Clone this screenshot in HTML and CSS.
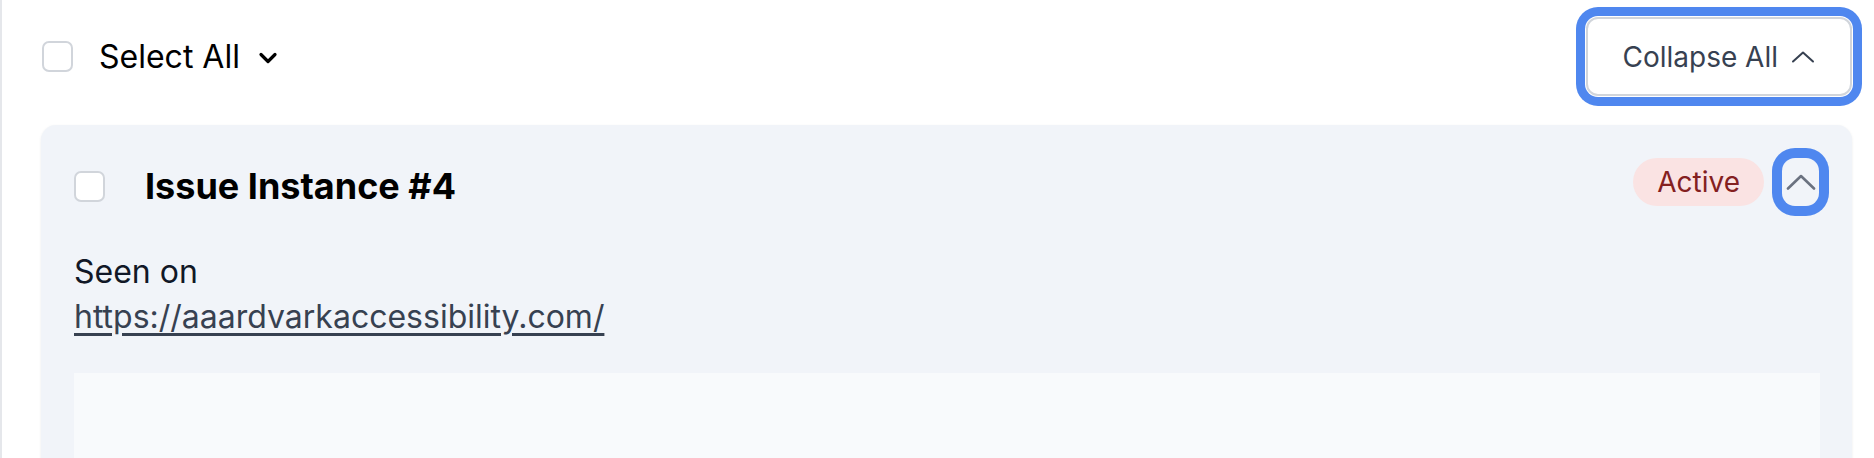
FILE: index.html
```html
<!DOCTYPE html>
<html lang="en">
<head>
    <meta charset="UTF-8">
    <title>Issue Instances</title>
    <link rel="stylesheet" href="styles.css">
</head>

<body>
    <div class="page">
        <div class="toolbar">
            <label class="select-all">
                <input type="checkbox" class="check">
                <span>Select All</span>
                <svg class="select-caret" width="20" height="14" viewBox="0 0 20 14">
                    <path d="M3 3.5l7 7 7-7" fill="none" stroke="#000" stroke-width="3.2" stroke-linecap="round" stroke-linejoin="round"/>
                </svg>
            </label>

            <button class="collapse-btn" type="button">
                Collapse All
                <svg width="24" height="12" viewBox="0 0 24 12">
                    <path d="M2 10.5L12 1.5l10 9" fill="none" stroke="#374151" stroke-width="2" stroke-linecap="round" stroke-linejoin="round"/>
                </svg>
            </button>
        </div>

        <div class="issue-card">
            <div class="issue-head">
                <div class="issue-title-wrap">
                    <input type="checkbox" class="check">
                    <h3 class="issue-title">Issue Instance #4</h3>
                </div>
                <div class="issue-actions">
                    <span class="badge">Active</span>
                    <button class="toggle-btn" type="button">
                        <svg width="30" height="16" viewBox="0 0 30 16">
                            <path d="M2 14.5L15 2l13 12.5" fill="none" stroke="#6b7280" stroke-width="2.6" stroke-linecap="round" stroke-linejoin="round"/>
                        </svg>
                    </button>
                </div>
            </div>

            <div class="issue-body">
                <p class="seen-label">Seen on</p>
                <a class="seen-link" href="#">https://aaardvarkaccessibility.com/</a>
                <div class="preview"></div>
            </div>
        </div>
    </div>
</body>
</html>
```

FILE: styles.css
```css
body {
    margin: 0;
    font-family: 'Inter', 'Noto Sans', sans-serif;
    background: #fff;
    color: #111827;
    overflow: hidden;
}

.page {
    border-left: 2px solid #e5e7eb;
    padding: 17px 22px 0 39px;
    min-height: 100vh;
}

.toolbar {
    display: flex;
    justify-content: space-between;
    align-items: center;
    margin-bottom: 29px;
}

.select-all {
    display: flex;
    align-items: center;
    font-size: 32px;
    color: #000;
    margin-left: 1px;
}

.select-all span {
    margin-left: 26px;
}

.select-caret {
    margin-left: 18px;
    margin-top: 2px;
}

.check {
    appearance: none;
    -webkit-appearance: none;
    margin: 0;
    width: 31px;
    height: 31px;
    border: 2px solid #d1d5db;
    border-radius: 7px;
    background: #fff;
    flex-shrink: 0;
}

.collapse-btn {
    display: flex;
    align-items: center;
    gap: 13px;
    height: 79px;
    padding: 0 35px 0 34px;
    font-family: inherit;
    font-size: 28px;
    color: #374151;
    background: #fff;
    border: 2px solid #d1d5db;
    border-radius: 12px;
    box-shadow: 0 0 0 1px #fff, 0 0 0 10px #4f87ef;
    cursor: pointer;
}

.issue-card {
    background: #f1f4f9;
    border-radius: 15px;
    padding: 32px 32px 0 33px;
    box-shadow: 0 1px 3px rgba(0, 0, 0, 0.08);
}

.issue-head {
    display: flex;
    justify-content: space-between;
    align-items: flex-start;
}

.issue-title-wrap {
    display: flex;
    align-items: center;
    margin-top: 4px;
}

.issue-title {
    margin: 0 0 0 40px;
    font-size: 36px;
    line-height: 51px;
    font-weight: 700;
    color: #000;
}

.issue-actions {
    display: flex;
    align-items: center;
    gap: 19px;
}

.badge {
    display: inline-flex;
    align-items: center;
    height: 48px;
    padding: 0 24px;
    border-radius: 24px;
    background: #fae3e3;
    color: #84201f;
    font-size: 28px;
    margin-top: 1px;
}

.toggle-btn {
    display: flex;
    align-items: center;
    justify-content: center;
    width: 35px;
    height: 46px;
    padding: 0;
    margin-right: 2px;
    border: none;
    border-radius: 12px;
    background: #f1f4f9;
    box-shadow: 0 0 0 1px #f1f4f9, 0 0 0 11px #4f87ef;
    cursor: pointer;
}

.issue-body {
    margin-top: 37px;
}

.seen-label {
    margin: 0;
    font-size: 32px;
    line-height: 45px;
    color: #111827;
}

.seen-link {
    display: inline-block;
    font-size: 32px;
    line-height: 45px;
    color: #374151;
    text-decoration: underline;
    text-underline-offset: 5px;
}

.preview {
    margin-top: 34px;
    height: 300px;
    background: #f8fafc;
}
```
